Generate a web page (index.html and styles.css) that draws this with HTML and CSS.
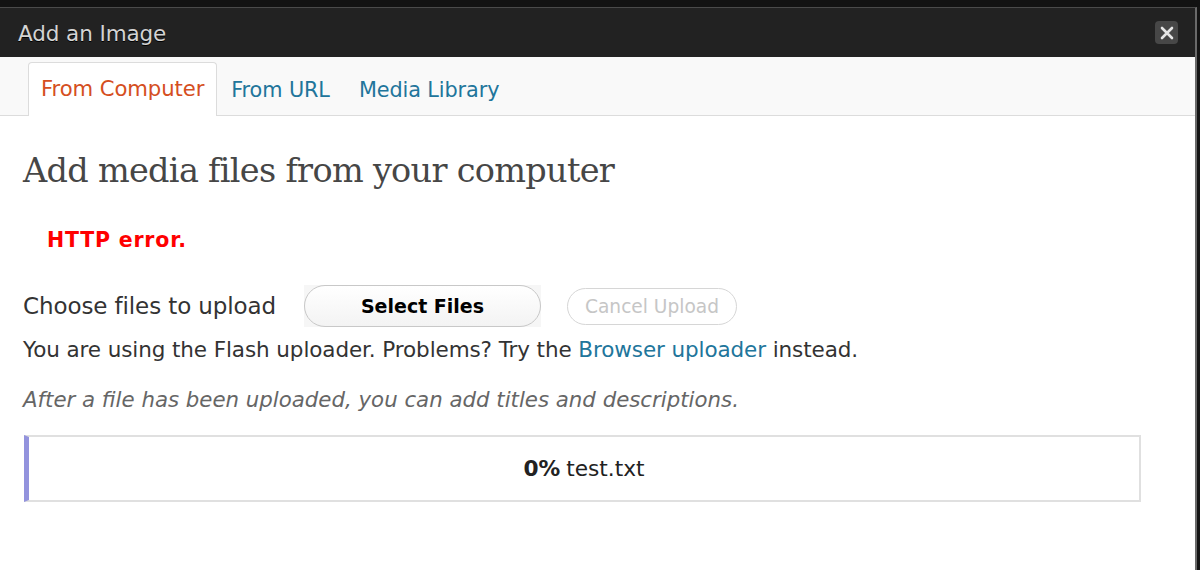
FILE: index.html
```html
<!DOCTYPE html>
<html>
<head>
<meta charset="utf-8">
<link rel="stylesheet" href="styles.css">
</head>
<body>
<div class="topstrip"></div>
<div class="dialog">
  <div class="titlebar">
    <span class="title">Add an Image</span>
    <span class="close"><svg width="14" height="14" viewBox="0 0 14 14"><path d="M2 2 L12 12 M12 2 L2 12" stroke="#e6e6e6" stroke-width="2.6" stroke-linecap="round"/></svg></span>
  </div>
  <div class="tabs">
    <a class="tab active">From Computer</a>
    <a class="tab">From URL</a>
    <a class="tab">Media Library</a>
  </div>
  <div class="content">
    <h2 class="heading">Add media files from your computer</h2>
    <div class="error">HTTP error.</div>
    <div class="choose-row">
      <span class="choose-label">Choose files to upload</span>
      <span class="flash-box"><span class="btn select">Select Files</span></span>
      <span class="btn cancel">Cancel Upload</span>
    </div>
    <p class="flash-note">You are using the Flash uploader. Problems? Try the <a class="link">Browser uploader</a> instead.</p>
    <p class="hint">After a file has been uploaded, you can add titles and descriptions.</p>
    <div class="progress"><b>0%</b> test.txt</div>
  </div>
</div>
</body>
</html>
```

FILE: styles.css
```css
html, body {
  margin: 0;
  padding: 0;
  background: #141414;
  height: 570px;
  overflow: hidden;
  font-family: "DejaVu Sans", "Liberation Sans", sans-serif;
}
.topstrip {
  height: 7px;
  background: #121212;
}
.dialog {
  width: 1197px;
  height: 563px;
  border-top: 1px solid #4a4a4a;
  border-right: 2px solid #6a6a6a;
  background: #fff;
  box-sizing: border-box;
}
.titlebar {
  height: 49px;
  background: #222;
  display: flex;
  align-items: center;
  justify-content: space-between;
  padding: 0 17px 0 18px;
}
.title {
  color: #d4d4d4;
  font-size: 21.5px;
  letter-spacing: -0.1px;
  text-shadow: 0 1px 0 #000;
  padding-top: 2px;
}
.close {
  width: 23px;
  height: 23px;
  border-radius: 4px;
  background: #474747;
  display: flex;
  align-items: center;
  justify-content: center;
}
.tabs {
  height: 58px;
  background: #f9f9f9;
  border-bottom: 1px solid #dcdcdc;
  display: flex;
  align-items: flex-end;
  padding-left: 28px;
}
.tab {
  display: block;
  height: 52px;
  line-height: 52px;
  padding: 0 12px;
  margin-bottom: -1px;
  font-size: 21.2px;
  color: #21759b;
  border: 1px solid transparent;
  border-bottom: none;
  border-radius: 4px 4px 0 0;
  letter-spacing: -0.1px;
}
.tab + .tab { padding: 0; margin-left: 27px; font-size: 20.8px; }
.tab.active + .tab { margin-left: 13px; }
.tab.active {
  background: #fff;
  border-color: #dcdcdc;
  color: #d54e21;
  height: 53px;
}
.content {
  padding: 0 58px 0 23px;
}
.heading {
  margin: 0;
  padding-top: 33px;
  font-family: "DejaVu Serif", "Liberation Serif", serif;
  font-weight: normal;
  font-size: 33.5px;
  color: #464646;
  letter-spacing: -0.7px;
  line-height: 44px;
}
.error {
  margin-top: 35px;
  margin-left: 24px;
  color: #ff0000;
  font-weight: bold;
  font-size: 20.5px;
  letter-spacing: 0.8px;
  line-height: 24px;
}
.choose-row {
  margin-top: 33px;
  display: flex;
  align-items: center;
  height: 42px;
}
.choose-label {
  font-size: 23px;
  color: #333;
  width: 281px;
  letter-spacing: -0.1px;
}
.flash-box {
  background: #f6f6f6;
  display: block;
  width: 237px;
  height: 42px;
}
.btn {
  display: flex;
  align-items: center;
  justify-content: center;
  border: 1px solid #c8c8c8;
  border-radius: 21px;
  box-sizing: border-box;
}
.btn.select {
  width: 237px;
  height: 42px;
  background: linear-gradient(#ffffff, #f3f3f3);
  font-weight: bold;
  font-size: 19px;
  color: #000;
}
.btn.cancel {
  margin-left: 26px;
  width: 170px;
  height: 37px;
  background: #fff;
  border-color: #d6d6d6;
  color: #c6c6c6;
  font-size: 18.6px;
}
.flash-note {
  margin: 10px 0 0;
  font-size: 21.5px;
  color: #333;
  line-height: 26px;
  letter-spacing: -0.1px;
}
.link { color: #21759b; }
.hint {
  margin: 24px 0 0;
  font-size: 21.3px;
  font-style: italic;
  color: #666;
  line-height: 26px;
}
.progress {
  margin-top: 22px;
  width: 1117px;
  height: 67px;
  box-sizing: border-box;
  border: 2px solid #e0e0e0;
  border-left: 5px solid #9393dd;
  display: flex;
  align-items: center;
  justify-content: center;
  font-size: 21.7px;
  color: #222;
  margin-left: 1px;
}
.progress b { margin-right: 6px; }
```
